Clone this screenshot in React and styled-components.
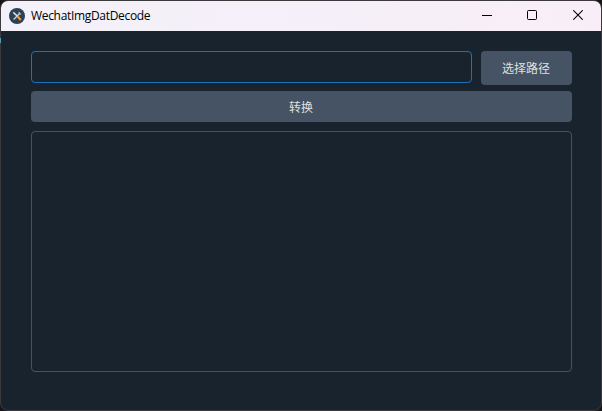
import React from "react";
import styled, { createGlobalStyle } from "styled-components";

const GlobalStyle = createGlobalStyle`
  * { box-sizing: border-box; }
  body {
    margin: 0;
    background: #161414;
    overflow: hidden;
    font-family: "Open Sans", "Noto Sans CJK SC", sans-serif;
  }
`;

const Window = styled.main`
  position: relative;
  display: flex;
  flex-direction: column;
  width: 602px;
  height: 411px;
  border: 1px solid #3d3a3e;
  border-radius: 8px;
  background: #19232d;
`;

const EdgeGlow = styled.span`
  position: absolute;
  left: -1px;
  top: 37px;
  width: 1px;
  height: 5px;
  background: #5b9cb8;
`;

const TitleBar = styled.header`
  display: flex;
  flex: none;
  align-items: center;
  height: 30px;
  padding-left: 8px;
  border-radius: 7px 7px 0 0;
  background: linear-gradient(90deg, #f3f1f9 0%, #f5eff8 60%, #f9eef7 100%);
`;

const Title = styled.h1`
  flex: 1;
  margin: 0 0 0 6px;
  color: #000;
  font-size: 12px;
  font-weight: 400;
  line-height: 16px;
  letter-spacing: -0.32px;
`;

const WindowButton = styled.button`
  display: grid;
  place-items: center;
  width: ${({ $width }) => $width};
  height: 30px;
  padding: 0 0 2px;
  border: 0;
  background: transparent;
`;

const Content = styled.section`
  display: flex;
  flex: 1;
  flex-direction: column;
  padding: 20px 29px 38px 30px;
`;

const PathRow = styled.div`
  display: flex;
  align-items: flex-start;
  gap: 9px;
  margin-bottom: 6px;
`;

const PathInput = styled.input`
  flex: 1;
  min-width: 0;
  height: 32px;
  padding: 0 6px;
  border: 1px solid #1a72bb;
  border-radius: 4px;
  outline: 0;
  background: #19232d;
  color: #dfe1e2;
  font: inherit;
  font-size: 12px;
`;

const ActionButton = styled.button`
  width: ${({ $width }) => $width};
  height: ${({ $height }) => $height};
  padding: 0 1px 0 0;
  border: 0;
  border-radius: 4px;
  background: #455364;
  color: #dfe1e2;
  font-family: "Noto Sans CJK SC", sans-serif;
  font-size: 12px;
  font-weight: 400;
  line-height: 18px;
`;

const Output = styled.div`
  flex: 1;
  margin-top: 9px;
  border: 1px solid #455364;
  border-radius: 4px;
`;

function ToolsLogo() {
  return (
    <svg width="16" height="16" viewBox="0 0 16 16" fill="none">
      <circle cx="8" cy="8" r="8" fill="#2c4056" />
      <path d="M4.6 11.6 10.2 6" stroke="#c9d0d4" strokeWidth="1.4" />
      <path d="M10.2 4.1 10.2 6 12.2 6" stroke="#c9d0d4" strokeWidth="1.2" />
      <path d="M4.3 4.4 8.6 8.4" stroke="#d7dde0" strokeWidth="1.5" />
      <path d="m8.6 8.5 3.2 3.5" stroke="#f29a2e" strokeWidth="2.2" />
    </svg>
  );
}

export default function App() {
  return (
    <>
      <GlobalStyle />
      <Window>
        <TitleBar>
          <ToolsLogo />
          <Title>WechatImgDatDecode</Title>
          <WindowButton $width="44px" aria-label="Minimize">
            <svg width="10" height="10" shapeRendering="crispEdges">
              <path d="M0 5.5h10" stroke="#000" />
            </svg>
          </WindowButton>
          <WindowButton $width="46px" aria-label="Maximize">
            <svg width="10" height="10" fill="none">
              <rect x=".5" y=".5" width="9" height="9" rx="1" stroke="#000" />
            </svg>
          </WindowButton>
          <WindowButton $width="46px" aria-label="Close">
            <svg width="10" height="10" fill="none">
              <path d="m.3.3 9.4 9.4M9.7.3.3 9.7" stroke="#000" strokeWidth="1.05" />
            </svg>
          </WindowButton>
        </TitleBar>
        <Content>
          <PathRow>
            <PathInput aria-label="路径" />
            <ActionButton $width="91px" $height="34px">选择路径</ActionButton>
          </PathRow>
          <ActionButton $width="100%" $height="31px">转换</ActionButton>
          <Output />
        </Content>
        <EdgeGlow />
      </Window>
    </>
  );
}
